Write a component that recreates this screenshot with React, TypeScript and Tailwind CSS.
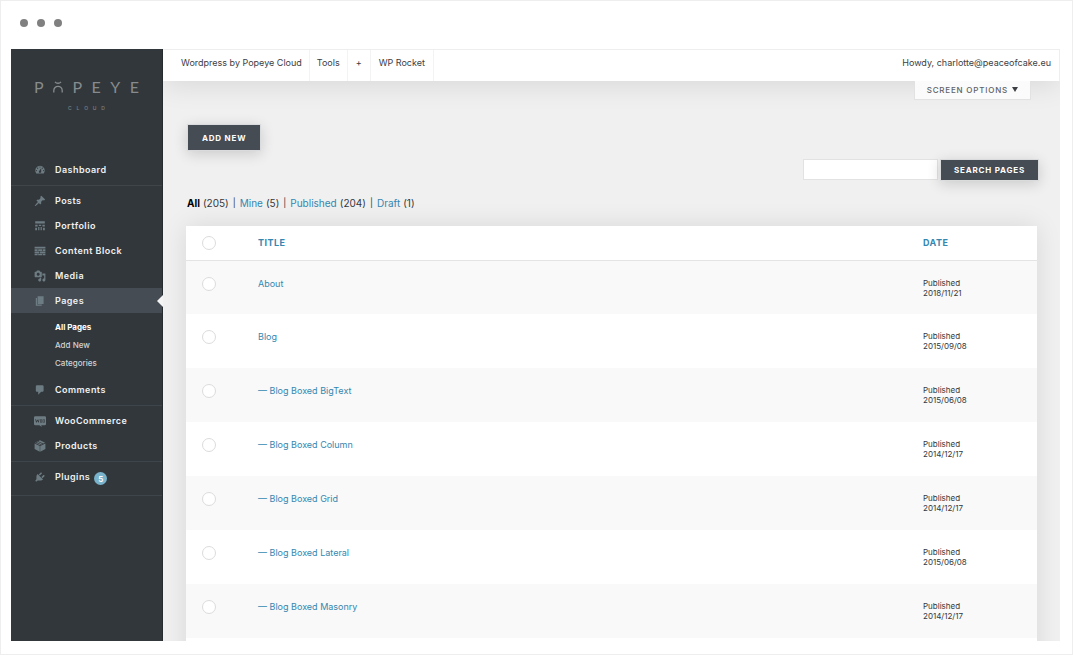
import React from "react";

type IconName =
  | "dashboard" | "posts" | "portfolio" | "block" | "media"
  | "pages" | "comments" | "woo" | "products" | "plugins";

const paths: Record<IconName, string> = {
  dashboard:
    "M3.76 16h12.48A7.998 7.998 0 0 0 10 3a7.998 7.998 0 0 0-6.24 13zM10 4c.55 0 1 .45 1 1s-.45 1-1 1-1-.45-1-1 .45-1 1-1zM6 6c.55 0 1 .45 1 1s-.45 1-1 1-1-.45-1-1 .45-1 1-1zm8 0c.55 0 1 .45 1 1s-.45 1-1 1-1-.45-1-1 .45-1 1-1zm-5.37 5.55L12 7v6c0 1.1-.9 2-2 2s-2-.9-2-2c0-.57.24-1.08.63-1.45zM4 10c.55 0 1 .45 1 1s-.45 1-1 1-1-.45-1-1 .45-1 1-1zm12 0c.55 0 1 .45 1 1s-.45 1-1 1-1-.45-1-1 .45-1 1-1z",
  posts:
    "M10.44 3.02l1.82-1.82 6.36 6.35-1.83 1.82c-1.05-.68-2.48-.57-3.41.36l-.75.75c-.92.93-1.04 2.35-.35 3.41l-1.83 1.82-2.41-2.41-2.8 2.79c-.42.42-3.38 2.71-3.8 2.29s1.86-3.39 2.28-3.81l2.79-2.79L4.1 9.36l1.83-1.82c1.05.69 2.48.57 3.4-.36l.75-.75c.93-.92 1.05-2.35.36-3.41z",
  portfolio:
    "M2 2h16v4H2zM2 8h4v3H2zM8 8h4v2H8zM14 8h4v3h-4zM2 13h3v4H2zM7 11.500h2V17H7zM11 11.500h2V17h-2zM15 13h3v4h-3z",
  block:
    "M1 3h18v3H1zM1 7h5v3H1zM7 7h7v3H7zM15 7h4v3h-4zM1 11h8v3H1zM10 11h9v3h-9zM1 15h5v2H1zM7 15h7v2H7zM15 15h4v2h-4z",
  media:
    "M13 11V4c0-.55-.45-1-1-1h-1.67L9 1H5L3.67 3H2c-.55 0-1 .45-1 1v7c0 .55.45 1 1 1h10c.55 0 1-.45 1-1zM7 4.5c1.38 0 2.5 1.12 2.5 2.5S8.38 9.5 7 9.5 4.5 8.38 4.5 7 5.62 4.5 7 4.5zM14 6h5v10.5c0 1.38-1.12 2.5-2.5 2.5S14 17.88 14 16.5s1.12-2.5 2.5-2.5c.17 0 .34.02.5.05V9h-3V6zm-4 8.05V13h2v3.5c0 1.38-1.12 2.5-2.5 2.5S7 17.88 7 16.5 8.12 14 9.5 14c.17 0 .34.02.5.05z",
  pages: "M6 15V2h10v13H6zm-1 1h8v2H3V5h2v11z",
  comments:
    "M5 2h9q.82 0 1.41.59T16 4v7q0 .82-.59 1.41T14 13h-2l-5 5v-5H5q-.82 0-1.41-.59T3 11V4q0-.82.59-1.41T5 2z",
  woo: "M2 2h16a2 2 0 0 1 2 2v11a2 2 0 0 1-2 2h-6l1 3-4-3H2a2 2 0 0 1-2-2V4a2 2 0 0 1 2-2zM2 7l1.500 5.500h1L6 9.500l1 3h1L9 7H8l-.7 3.500L6.500 8h-1l-1 2.500L3.200 7zM10 7.500v5h3.500v-5zM11 8.500h1.500v3H11zM14.500 7.500v5H18v-5zM15.500 8.500H17v3h-1.500z",
  products:
    "M10 .5l8.500 4-3 1.500-8.700-4zM5.500 2.600l8.700 4-1.700.8-8.700-4zM2.600 4l8.700 4L10 8.700 1.500 4.600zM1 6l8.600 4.200V19.500L1 15.200zM19 6l-8.600 4.200V19.500L19 15.200z",
  plugins:
    "M13.11 4.36L9.87 7.6 8 5.73l3.24-3.24c.35-.34 1.05-.2 1.56.32.52.51.66 1.21.31 1.55zm-8 1.77l.91-1.12 9.01 9.01-1.19.84c-.71.71-2.63 1.16-3.82 1.16H6.14L4.9 17.26c-.59.59-1.54.59-2.12 0-.59-.58-.59-1.53 0-2.12l1.24-1.24v-3.88c0-1.13.4-3.19 1.09-3.89zm7.26 3.97l3.24-3.24c.34-.35 1.04-.21 1.55.31.52.51.66 1.21.31 1.55l-3.24 3.25z",
};

function Icon({ name }: { name: IconName }) {
  return (
    <svg viewBox="0 0 20 20" className="size-3 shrink-0 fill-[#6d7c82]" fillRule="evenodd" aria-hidden="true">
      <path d={paths[name]} />
    </svg>
  );
}

function MenuItem({ icon, label, active = false, badge }: { icon: IconName; label: string; active?: boolean; badge?: string }) {
  return (
    <li className={active ? "relative bg-[#454c54]" : "relative"}>
      <a href="#" className="flex h-[25px] items-center pl-[23px] text-[9px] font-semibold tracking-wider text-[#eef0f1]">
        <Icon name={icon} />
        <span className="pl-[9px]">{label}</span>
        {badge && (
          <span className="mt-1 ml-1 flex size-[13px] items-center justify-center rounded-full bg-[#79b3cb] text-[8px] tracking-normal text-white">
            {badge}
          </span>
        )}
      </a>
      {active && (
        <svg viewBox="0 0 6 12" className="absolute top-1/2 -right-px h-3 w-1.5 -translate-y-1/2 fill-[#f4f4f4]" aria-hidden="true">
          <path d="M6 0v12L0 6z" />
        </svg>
      )}
    </li>
  );
}

function MenuGroup({ children }: { children: React.ReactNode }) {
  return <ul className="border-b border-[#3f464b] pt-[2px] pb-[3px]">{children}</ul>;
}

function Sidebar() {
  return (
    <nav aria-label="Main menu" className="w-[152px] shrink-0 border-r border-[#262b30] bg-[#32373b]">
      <div className="flex h-[106px] flex-col items-center pt-7 text-[#868b8e]">
        <div className="flex h-5 w-[105px] items-center justify-between font-['Lato'] text-[16px] leading-5">
          <span>P</span>
          <svg viewBox="0 0 10 12" className="h-3 w-2.5 fill-none stroke-current stroke-[1.3]" aria-hidden="true">
            <path d="M2 .8C3.500 2.700 6.500 2.700 8 .8M.8 11.500V9.500a4.200 4.200 0 0 1 8.400 0v2" />
          </svg>
          <span>P</span>
          <span>E</span>
          <span>Y</span>
          <span>E</span>
        </div>
        <div className="mt-1.5 flex w-[37px] justify-between text-[5px] leading-[10px] font-medium text-[#7d8387]">
          <span>C</span><span>L</span><span>O</span><span>U</span><span>D</span>
        </div>
      </div>
      <MenuGroup>
        <MenuItem icon="dashboard" label="Dashboard" />
      </MenuGroup>
      <MenuGroup>
        <MenuItem icon="posts" label="Posts" />
        <MenuItem icon="portfolio" label="Portfolio" />
        <MenuItem icon="block" label="Content Block" />
        <MenuItem icon="media" label="Media" />
        <MenuItem icon="pages" label="Pages" active />
        <li>
          <ul className="pt-[5px] pb-[5px] pl-11 text-[8px] leading-[18px] font-medium text-[#cfd3d5]">
            <li><a href="#" className="font-bold text-white">All Pages</a></li>
            <li><a href="#">Add New</a></li>
            <li><a href="#">Categories</a></li>
          </ul>
        </li>
        <MenuItem icon="comments" label="Comments" />
      </MenuGroup>
      <MenuGroup>
        <MenuItem icon="woo" label="WooCommerce" />
        <MenuItem icon="products" label="Products" />
      </MenuGroup>
      <MenuGroup>
        <MenuItem icon="plugins" label="Plugins" badge="5" />
        <li className="h-[3px]" aria-hidden="true" />
      </MenuGroup>
    </nav>
  );
}

const filters = [
  { label: "All", count: 205 },
  { label: "Mine", count: 5 },
  { label: "Published", count: 204 },
  { label: "Draft", count: 1 },
];

const rows = [
  ["About", "2018/11/21"],
  ["Blog", "2015/09/08"],
  ["— Blog Boxed BigText", "2015/06/08"],
  ["— Blog Boxed Column", "2014/12/17"],
  ["— Blog Boxed Grid", "2014/12/17"],
  ["— Blog Boxed Lateral", "2015/06/08"],
  ["— Blog Boxed Masonry", "2014/12/17"],
];

function Check({ label }: { label: string }) {
  return (
    <input
      type="checkbox"
      aria-label={label}
      className="block size-3.5 appearance-none rounded-full border border-[#dcdcdc] bg-white checked:bg-[#3487b0]"
    />
  );
}

export default function App() {
  return (
    <div className="flex h-screen flex-col border border-[#eeeeee] bg-white px-2.5 pb-[13px] font-['Inter',sans-serif]">
      <div className="flex h-12 shrink-0 items-start gap-[9px] pt-[18px] pl-[9px]">
        <span className="size-2 rounded-full bg-[#808080]" />
        <span className="size-2 rounded-full bg-[#808080]" />
        <span className="size-2 rounded-full bg-[#808080]" />
      </div>
      <div className="mr-0.5 flex min-h-0 flex-1 overflow-hidden">
        <Sidebar />
        <div className="flex min-w-0 flex-1 flex-col overflow-hidden bg-[#f0f0f0]">
          <header className="relative z-10 flex h-8 shrink-0 border-t border-r border-[#eeeeee] bg-white text-[9px] text-[#3c4044] shadow-[0_4px_28px_rgba(0,0,0,0.1)]">
            <a href="#" className="flex items-center border-r border-[#f3f3f3] pr-[7px] pb-1.5 pl-[18px]">Wordpress by Popeye Cloud</a>
            <a href="#" className="flex items-center border-r border-[#f3f3f3] px-[7px] pb-1.5">Tools</a>
            <a href="#" className="flex items-center border-r border-[#f3f3f3] px-2 pb-1.5">+</a>
            <a href="#" className="flex items-center border-r border-[#f3f3f3] px-2 pb-1.5">WP Rocket</a>
            <a href="#" className="ml-auto flex items-center pr-2 pb-1.5">Howdy, charlotte@peaceofcake.eu</a>
          </header>
          <main className="px-[23px]">
            <div className="flex justify-end pr-[6px]">
              <button className="relative z-20 flex h-[19px] items-center gap-1 border border-t-0 border-[#e2e2e2] bg-[#fbfbfb] px-3 text-[8px] font-medium tracking-widest text-[#5d6267]">
                SCREEN OPTIONS
                <svg viewBox="0 0 6 5" className="mb-0.5 h-[5px] w-1.5 fill-[#3c4044]" aria-hidden="true"><path d="M0 0h6L3 5z" /></svg>
              </button>
            </div>
            <button className="mt-6 ml-px block h-[27px] border border-white/80 bg-[#454c54] px-3.5 text-[8px] font-bold tracking-widest text-white shadow-[0_3px_14px_rgba(0,0,0,0.16)]">
              ADD NEW
            </button>
            <form className="-mr-0.5 mt-2 flex justify-end gap-0.5" onSubmit={(e) => e.preventDefault()}>
              <input type="search" aria-label="Search pages" className="h-[21px] w-[135px] border border-[#e2e2e2] bg-white px-2 text-[9px] outline-none" />
              <button className="h-[22px] border border-white/80 bg-[#454c54] px-[13px] text-[8px] font-bold tracking-widest text-white shadow-[0_3px_14px_rgba(0,0,0,0.16)]">
                SEARCH PAGES
              </button>
            </form>
            <ul className="mt-[15px] flex h-3.5 items-center pl-px text-[10px] text-[#33383c]">
              {filters.map((f, i) => (
                <li key={f.label} className="flex items-center">
                  {i > 0 && <span className="px-1 text-[9px]">|</span>}
                  <a href="#" className={i === 0 ? "font-bold text-black" : "text-[#3487b0]"}>{f.label}</a>
                  <span className="pl-[3px]">({f.count})</span>
                </li>
              ))}
            </ul>
            <table className="mt-4 w-full table-fixed border-collapse bg-white text-left shadow-[0_0_24px_rgba(0,0,0,0.1)]">
              <thead>
                <tr className="h-[34px] border-b border-[#e4e4e4] text-[9px] tracking-wider text-[#3487b0]">
                  <td className="w-[72px] pl-4"><Check label="Select all pages" /></td>
                  <th className="pb-px font-bold"><a href="#">TITLE</a></th>
                  <th className="w-[114px] pb-px font-bold"><a href="#">DATE</a></th>
                </tr>
              </thead>
              <tbody>
                {rows.map(([title, date]) => (
                  <tr key={title} className="h-[54px] align-top odd:bg-[#f9f9f9]">
                    <td className="pt-4 pl-4"><Check label={"Select " + title} /></td>
                    <td className="pt-4 text-[9px] leading-3.5 text-[#3487b0]"><a href="#">{title}</a></td>
                    <td className="pt-[17px] text-[8px] leading-[10px] text-[#33383c]">Published<br />{date}</td>
                  </tr>
                ))}
              </tbody>
              <tfoot>
                <tr className="h-[54px]"><td colSpan={3} /></tr>
              </tfoot>
            </table>
          </main>
        </div>
      </div>
    </div>
  );
}
